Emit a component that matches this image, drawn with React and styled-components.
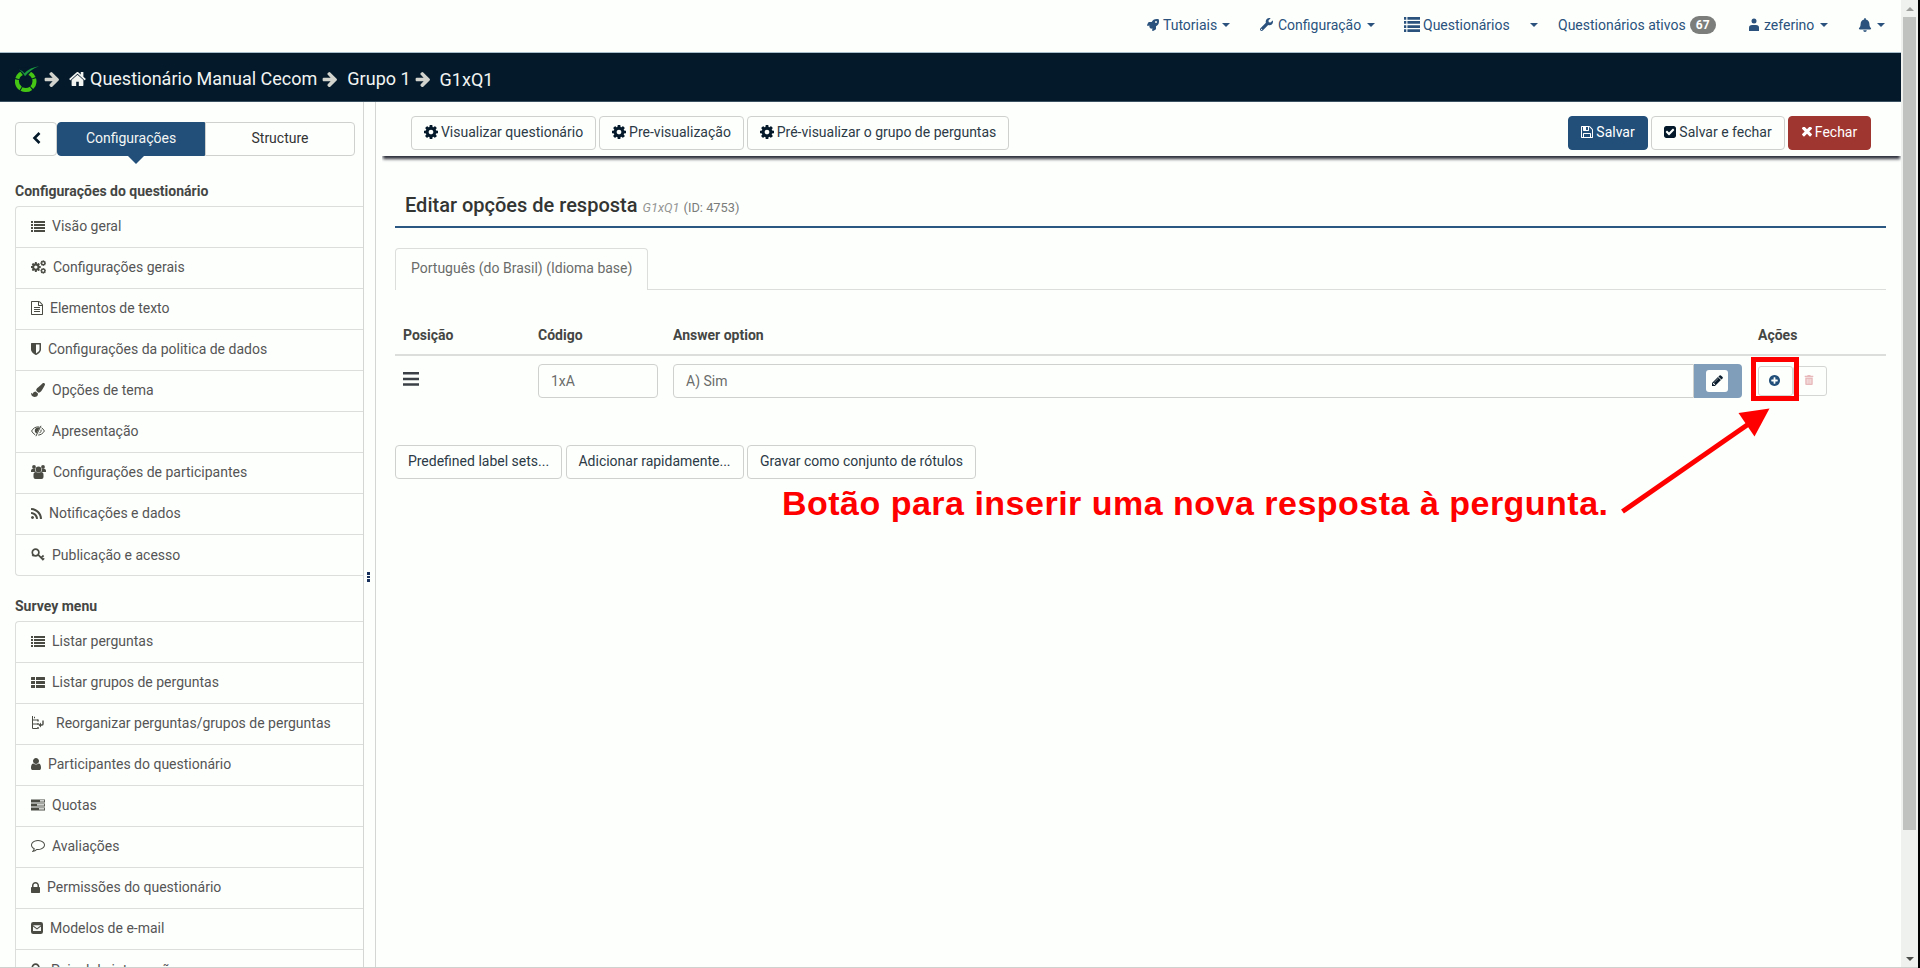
import React from 'react';
import styled, { createGlobalStyle, css } from 'styled-components';
import { FaRocket, FaWrench, FaBell, FaPaintBrush, FaTrashAlt } from 'react-icons/fa';

const Global = createGlobalStyle`
  * { box-sizing: border-box; }
  body { margin: 0; background: #fdfffd; overflow: hidden; font-family: Roboto, "Liberation Sans", sans-serif; font-size: 14px; line-height: 20px; color: #333; }
`;

/* ---------- icons ---------- */
const Svg = styled.svg`
  display: block;
  flex: none;
  fill: currentColor;
`;
const COG = 'M1152 896q0-106-75-181t-181-75-181 75-75 181 75 181 181 75 181-75 75-181zm512-109v222q0 12-8 23t-20 13l-185 28q-19 54-39 91 35 50 107 138 10 12 10 25t-9 23q-27 37-99 108t-94 71q-12 0-26-9l-138-108q-44 23-91 38-16 136-29 186-7 28-36 28h-222q-14 0-24.500-8.500t-11.500-21.500l-28-184q-49-16-90-37l-141 107q-10 9-25 9-14 0-25-11-126-114-165-168-7-10-7-23 0-12 8-23 15-21 51-66.500t54-70.500q-27-50-41-99l-183-27q-13-2-21-12.500t-8-23.500v-222q0-12 8-23t19-13l186-28q14-46 39-92-40-57-107-138-10-12-10-24 0-10 9-23 26-36 98.500-107.500t94.500-71.500q13 0 26 10l138 107q44-23 91-38 16-136 29-186 7-28 36-28h222q14 0 24.500 8.500t11.500 21.500l28 184q49 16 90 37l142-107q9-9 24-9 13 0 25 10 129 119 165 170 7 8 7 22 0 12-8 23-15 21-51 66.500t-54 70.500q26 50 41 98l183 28q13 2 21 12.500t8 23.500z';
const PATHS = {
  home: ['64 256 1664 1280', 'M1472 992v480q0 26-19 45t-45 19h-384v-384h-256v384h-384q-26 0-45-19t-19-45v-480q0-1 .5-3t.5-3l575-474 575 474q1 2 1 6zm223-69l-62 74q-8 9-21 11h-3q-13 0-21-7l-692-577-692 577q-12 8-24 7-13-2-21-11l-62-74q-8-10-7-23.500t11-21.500l719-599q32-26 76-26t76 26l244 204v-195q0-14 9-23t23-9h192q14 0 23 9t9 23v408l219 182q10 8 11 21.500t-7 23.500z'],
  arrow: ['64 180 1540 1560', 'M1600 960q0 54-37 91l-651 651q-39 37-91 37-51 0-90-37l-75-75q-38-38-38-91t38-91l293-293h-704q-52 0-84.500-37.500t-32.500-90.500v-128q0-53 32.500-90.500t84.500-37.500h704l-293-294q-38-36-38-90t38-90l75-75q38-38 90-38 53 0 91 38l651 651q37 35 37 90z'],
  cog: ['128 128 1536 1536', COG],
  check: ['128 128 1536 1536', 'M813 1299l614-614q19-19 19-45t-19-45l-102-102q-19-19-45-19t-45 19l-467 467-211-211q-19-19-45-19t-45 19l-102 102q-19 19-19 45t19 45l358 358q19 19 45 19t45-19zm851-883v960q0 119-84.500 203.500t-203.500 84.500h-960q-119 0-203.500-84.500t-84.500-203.500v-960q0-119 84.500-203.500t203.500-84.500h960q119 0 203.500 84.500t84.500 203.500z'],
  times: ['302 430 1188 1188', 'M1490 1322q0 40-28 68l-136 136q-28 28-68 28t-68-28l-294-294-294 294q-28 28-68 28t-68-28l-136-136q-28-28-28-68t28-68l294-294-294-294q-28-28-28-68t28-68l136-136q28-28 68-28t68 28l294 294 294-294q28-28 68-28t68 28l136 136q28 28 28 68t-28 68l-294 294 294 294q28 28 28 68z'],
  save: ['128 128 1536 1536', 'M512 1536h768v-384h-768v384zm896 0h128v-896q0-14-10-38.500t-20-34.500l-281-281q-10-10-34-20t-39-10v416q0 40-28 68t-68 28h-576q-40 0-68-28t-28-68v-416h-128v1280h128v-416q0-40 28-68t68-28h832q40 0 68 28t28 68v416zm-384-928v-320q0-13-9.500-22.500t-22.500-9.500h-192q-13 0-22.500 9.500t-9.500 22.500v320q0 13 9.500 22.500t22.500 9.500h192q13 0 22.500-9.500t9.500-22.500zm640 32v928q0 40-28 68t-68 28h-1344q-40 0-68-28t-28-68v-1344q0-40 28-68t68-28h928q40 0 88 20t76 48l280 280q28 28 48 76t20 88z'],
  plus: ['128 128 1536 1536', 'M1344 960v-128q0-26-19-45t-45-19h-256v-256q0-26-19-45t-45-19h-128q-26 0-45 19t-19 45v256h-256q-26 0-45 19t-19 45v128q0 26 19 45t45 19h256v256q0 26 19 45t45 19h128q26 0 45-19t19-45v-256h256q26 0 45-19t19-45zm320-64q0 209-103 385.500t-279.500 279.500-385.500 103-385.500-103-279.500-279.500-103-385.500 103-385.500 279.500-279.500 385.500-103 385.500 103 279.500 279.500 103 385.500z'],
  file: ['128 0 1536 1792', 'M1596 380q28 28 48 76t20 88v1152q0 40-28 68t-68 28h-1344q-40 0-68-28t-28-68v-1600q0-40 28-68t68-28h896q40 0 88 20t76 48zm-444-244v376h376q-10-29-22-41l-313-313q-12-12-41-22zm384 1528v-1024h-416q-40 0-68-28t-28-68v-416h-768v1536h1280zm-1024-864q0-14 9-23t23-9h704q14 0 23 9t9 23v64q0 14-9 23t-23 9h-704q-14 0-23-9t-9-23v-64zm736 224q14 0 23 9t9 23v64q0 14-9 23t-23 9h-704q-14 0-23-9t-9-23v-64q0-14 9-23t23-9h704zm0 256q14 0 23 9t9 23v64q0 14-9 23t-23 9h-704q-14 0-23-9t-9-23v-64q0-14 9-23t23-9h704z'],
  lock: ['320 128 1152 1408', 'M640 768h512v-192q0-106-75-181t-181-75-181 75-75 181v192zm832 96v576q0 40-28 68t-68 28h-960q-40 0-68-28t-28-68v-576q0-40 28-68t68-28h32v-192q0-184 132-316t316-132 316 132 132 316v192h32q40 0 68 28t28 68z'],
  shield: ['256 128 1280 1536', 'M1344 960v-640h-448v1137q119-63 213-137 235-184 235-360zm192-768v768q0 86-33.500 170.500t-83 150-118 127.500-126.500 103-121 77.500-89.500 49.500-42.500 20q-12 6-26 6t-26-6q-16-7-42.500-20t-89.500-49.500-121-77.500-126.500-103-118-127.500-83-150-33.500-170.500v-768q0-26 19-45t45-19h1152q26 0 45 19t19 45z'],
  pencil: ['128 128 1536 1536', 'M491 1536l91-91-235-235-91 91v107h128v128h107zm523-928q0-22-22-22-10 0-17 7l-542 542q-7 7-7 17 0 22 22 22 10 0 17-7l542-542q7-7 7-17zm-54-192l416 416-832 832h-416v-416zm683 96q0 53-37 90l-166 166-416-416 166-165q36-38 90-38 53 0 91 38l235 234q37 39 37 91z'],
  user: ['256 128 1280 1536', 'M1536 1399q0 109-62.500 187t-150.500 78h-854q-88 0-150.500-78t-62.500-187q0-85 8.500-160.500t31.500-152 58.500-131 94-89 134.500-34.500q131 128 313 128t313-128q76 0 134.500 34.500t94 89 58.500 131 31.500 152 8.500 160.500zm-256-887q0 159-112.500 271.500t-271.500 112.500-271.500-112.500-112.500-271.500 112.500-271.500 271.500-112.500 271.500 112.500 112.500 271.500z'],
  rss: ['192 128 1408 1408', 'M576 1344q0 80-56 136t-136 56-136-56-56-136 56-136 136-56 136 56 56 136zm512 123q2 28-17 48-18 21-47 21h-135q-25 0-43-16.500t-20-41.500q-22-229-184.500-391.500t-391.500-184.500q-25-2-41.500-20t-16.500-43v-135q0-29 21-47 17-17 43-17h5q160 13 306 80.500t259 181.500q114 113 181.500 259t80.500 306zm512 2q2 27-18 47-18 20-46 20h-143q-26 0-44.500-17.500t-19.500-42.500q-12-215-101-408.500t-231.500-336-336-231.500-408.500-102q-25-1-42.500-19.500t-17.500-43.500v-143q0-28 20-46 18-18 44-18h3q262 13 501.500 120t425.500 294q187 186 294 425.500t120 501.500z'],
  comment: ['0 256 1792 1536', 'M896 384q-204 0-381.500 69.500t-282 187.500-104.500 255q0 112 71.500 213.500t201.500 175.500l87 50-27 96q-24 91-70 172 152-63 275-171l43-38 57 6q69 8 130 8 204 0 381.500-69.500t282-187.500 104.500-255-104.500-255-282-187.500-381.500-69.500zm896 512q0 174-120 321.500t-326 233-450 85.500q-70 0-145-8-198 175-460 242-49 14-114 22h-5q-15 0-27-10.500t-16-27.500v-1q-3-4-.5-12t2-10 4.500-9.500l6-9 7-8.500 8-9q7-8 31-34.500t34.500-38 31-39.500 32.500-51 27-59 26-76q-157-89-247.500-220t-90.500-281q0-174 120-321.500t326-233 450-85.500 450 85.500 326 233 120 321.500z'],
};
const Icon = ({ name, w, h }) => (
  <Svg width={w} height={h || w} viewBox={PATHS[name][0]} preserveAspectRatio="none">
    <path d={PATHS[name][1]} />
  </Svg>
);
const ListIcon = ({ w = 14, h = 11 }) => (
  <Svg width={w} height={h} viewBox="0 0 14 11" preserveAspectRatio="none">
    {[0, 3, 6, 9].map((y) => <path key={y} d={`M0 ${y}h2v2h-2zM3 ${y}h11v2h-11z`} />)}
  </Svg>
);
const ThListIcon = () => (
  <Svg width="14" height="11" viewBox="0 0 14 11">
    {[0, 4, 8].map((y) => <path key={y} d={`M0.500 ${y}h3.500v3h-3.500q-.5 0-.5-.5v-2q0-.5 .5-.5zM5 ${y}h8.500q.5 0 .5 .5v2q0 .5-.5 .5h-8.500z`} />)}
  </Svg>
);
const CogsIcon = () => (
  <Svg width="15" height="14" viewBox="0 0 15 14">
    <path transform="translate(-.9 1.300) scale(.0064)" d={COG} />
    <path transform="translate(8.800 -.3) scale(.0038)" d={COG} />
    <path transform="translate(8.800 7.400) scale(.0038)" d={COG} />
  </Svg>
);
const UsersIcon = () => (
  <Svg width="15" height="14" viewBox="0 0 15 14">
    <circle cx="3" cy="2" r="1.900" />
    <circle cx="12" cy="2" r="1.900" />
    <circle cx="7.500" cy="4.500" r="2.900" />
    <path d="M0 7V5.800Q0 4 1.300 4H4q0 2 .9 3zM15 7V5.800Q15 4 13.700 4H11q0 2-.9 3zM2.500 12V9.800Q2.500 7 5 7q2.500 1.600 5 0 2.500 0 2.500 2.800V12q0 2-2 2h-6q-2 0-2-2z" />
  </Svg>
);
const EyeIcon = () => (
  <Svg width="14" height="12" viewBox="0 0 14 12">
    <path d="M.6 6C2 3.300 4.400 1.900 7 1.900l1.500.2M4.200 9.800C2.700 9 1.500 7.700.6 6M10.500 2.800c1.200.7 2.200 1.800 2.900 3.200-1.400 2.400-3.700 4-6.200 4.100" fill="none" stroke="currentColor" strokeWidth="1" />
    <path d="M7 2.400a3.200 3.200 0 0 0-2.300 5.500l.8.700L8.800 2.500z" />
    <path d="M10 .8 4.900 11.200M10.200 4.600q.2 2.400-1.800 3.600" fill="none" stroke="currentColor" strokeWidth="1" />
  </Svg>
);
const KeyIcon = () => (
  <Svg width="14" height="13" viewBox="0 0 14 13">
    <g fill="none" stroke="currentColor">
      <circle cx="4.600" cy="4.500" r="3.300" strokeWidth="1.700" />
      <path d="M2.600 8.300 1.200 6.600" strokeWidth="1.500" />
      <path d="M7 6.600 12 11.600M10.300 9.600 12.600 7.500" strokeWidth="1.700" />
      <path d="M11.400 12.200 13.200 10.300" strokeWidth="1.400" />
    </g>
  </Svg>
);
const TreeIcon = () => (
  <Svg width="13" height="14" viewBox="0 0 13 14">
    <g fill="none" stroke="currentColor">
      <path d="M1.500 0v12.500h5M1.500 4h5.500M1.500 8h5" strokeWidth="1" />
      <path d="M3 1.500h1M7 3.500v2M7 7v2M7 11v2" strokeWidth="1.400" />
      <path d="M12 4.500v3.500q0 1-1 1h-2" strokeWidth="1.400" />
    </g>
    <path d="M10 6.500v5L7.500 9z" />
  </Svg>
);
const TasksIcon = () => (
  <Svg width="14" height="12" viewBox="0 0 14 12">
    <path fillRule="evenodd" d="M0 .5h14v3h-14zM9 1.300v1.200h4.200V1.300zM0 4.500h14v3h-14zM6 5.300v1.200h7.200V5.300zM0 8.500h14v3h-14zM8 9.300v1.200h5.200V9.300z" />
  </Svg>
);
const MailIcon = () => (
  <Svg width="12" height="12" viewBox="0 0 12 12">
    <rect width="12" height="12" rx="2.200" />
    <path d="M2 3.200h8L6 6.200zM2 4.500l4 2.900 4-2.900V9H2z" fill="#f4f6f4" />
  </Svg>
);
const BarsIcon = () => (
  <Svg width="16" height="14" viewBox="0 0 16 14">
    <path d="M0 0h16v2.500h-16zM0 5.700h16v2.500h-16zM0 11.300h16v2.500h-16z" />
  </Svg>
);
const ChevronIcon = () => (
  <Svg width="9" height="12" viewBox="0 0 9 12">
    <path d="M7.500 1 2.500 6l5 5" fill="none" stroke="currentColor" strokeWidth="2.600" />
  </Svg>
);
const PersonIcon = () => (
  <Svg width="10" height="13" viewBox="0 0 10 13">
    <circle cx="5" cy="3" r="2.500" />
    <path d="M0 13V9.500Q0 7 3 7h4q3 0 3 2.500V13z" />
  </Svg>
);
const Logo = () => (
  <Svg width="24" height="27" viewBox="0 0 24 27">
    <circle cx="10.700" cy="15.300" r="8.800" fill="none" stroke="#45c614" strokeWidth="4" strokeDasharray="10.060 1" strokeDashoffset="3" />
    <path d="M2.500 2 10.500 12.500 20 1z" fill="#041a2b" />
    <path d="M4.200 3.500q3.300 1 5.300 3.800Q15 1.500 24 .3 15.500 3.500 10 10.300 8 6.300 4.200 3.500z" fill="#1b9a3e" />
  </Svg>
);

/* ---------- frame ---------- */
const Screen = styled.div`
  width: 1920px;
  height: 968px;
  display: flex;
  overflow: hidden;
  position: relative;
`;
const Page = styled.div`
  width: 1901px;
  display: flex;
  flex-direction: column;
  border-bottom: 1px solid #cfd1cf;
`;
const ScrollTrack = styled.div`
  width: 17px;
  background: #eff1ef;
  display: flex;
  flex-direction: column;
  align-items: center;
  border-bottom: 1px solid #cfd1cf;
`;
const ScrollArrow = styled.div`
  height: 17px;
  display: flex;
  align-items: center;
  &::after {
    content: '';
    border: 4px solid transparent;
    ${(p) => p.$down ? css`border-top-color: #4c4e4c; margin-top: 4px;` : css`border-bottom-color: #9c9e9c; margin-bottom: 3px;`}
  }
`;
const Thumb = styled.div`
  width: 13px;
  height: 813px;
  background: #c0c2c0;
  margin-bottom: auto;
`;
const Edge = styled.div`
  width: 2px;
  background: #000;
`;

/* ---------- top navigation ---------- */
const TopNav = styled.nav`
  height: 52px;
  flex: none;
  padding-left: 1147px;
  padding-bottom: 3px;
  display: flex;
  align-items: center;
  color: #2a527c;
`;
const NavItem = styled.div`
  width: ${(p) => p.$w}px;
  display: flex;
  align-items: center;
  gap: ${(p) => p.$gap || 4}px;
  white-space: nowrap;
`;
const Caret = styled.i`
  border: 4px solid transparent;
  border-top-color: currentColor;
  border-bottom: 0;
  margin-left: ${(p) => p.$ml ?? 1}px;
`;
const Badge = styled.span`
  width: 26px;
  height: 18px;
  border-radius: 10px;
  background: #7c7e7c;
  color: #fff;
  font-size: 12px;
  font-weight: 700;
  line-height: 18px;
  text-align: center;
`;

/* ---------- breadcrumb ---------- */
const Crumbs = styled.div`
  height: 50px;
  flex: none;
  background: #041a2b;
  border-top: 1px solid #a9c0cc;
  border-bottom: 1px solid #3a5161;
  padding: 4px 0 0 15px;
  display: flex;
  align-items: center;
  color: #f2f4f2;
  font-size: 18px;
  white-space: nowrap;
`;
const CrumbArrow = styled.span`
  color: #d3d3cd;
  margin: 0 ${(p) => p.$r}px 0 ${(p) => p.$l}px;
`;
const CrumbText = styled.span`
  margin-left: ${(p) => p.$l || 0}px;
  padding-top: ${(p) => p.$drop || 0}px;
`;

/* ---------- sidebar ---------- */
const Body = styled.div`
  flex: 1;
  min-height: 0;
  display: flex;
`;
const Sidebar = styled.aside`
  width: 364px;
  flex: none;
  padding: 20px 0 0 15px;
  border-right: 1px solid #d4d6d4;
  overflow: hidden;
`;
const Handle = styled.div`
  width: 12px;
  flex: none;
  border-right: 1px solid #d4d6d4;
  display: flex;
  flex-direction: column;
  align-items: center;
  gap: 1px;
  padding: 470px 2px 0 0;
`;
const Dot = styled.i`
  width: 3px;
  height: 2.700px;
  background: #18305c;
`;
const Switcher = styled.div`
  display: flex;
  height: 34px;
`;
const Collapse = styled.button`
  width: 42px;
  border: 1px solid #cfd1cf;
  border-radius: 4px;
  background: none;
  color: #041a2b;
  display: flex;
  align-items: center;
  justify-content: center;
  padding: 0 0 2px;
`;
const Tab = styled.button`
  width: ${(p) => p.$w}px;
  padding: 0 0 2px;
  font: inherit;
  position: relative;
  border: 1px solid ${(p) => p.$active ? '#214f7a' : '#cfd1cf'};
  border-radius: ${(p) => p.$active ? '4px 0 0 4px' : '0 4px 4px 0'};
  background: ${(p) => p.$active ? '#214f7a' : 'none'};
  color: ${(p) => p.$active ? '#f4f6f4' : '#333'};
  ${(p) => p.$active && css`
    &::after {
      content: '';
      position: absolute;
      top: 32px;
      left: 69px;
      border: 9px solid transparent;
      border-top-color: #214f7a;
      border-bottom: 0;
    }
  `}
`;
const MenuTitle = styled.h4`
  margin: ${(p) => p.$top}px 0 5px;
  font-size: 14px;
  line-height: 20px;
  font-weight: 700;
  color: #444644;
`;
const Menu = styled.div`
  border: 1px solid #dcdedc;
  border-right: 0;
  border-radius: 4px 0 0 4px;
  height: ${(p) => p.$rows * 41 + 1}px;
`;
const MenuRow = styled.div`
  height: 41px;
  padding: 0 0 2px 15px;
  display: flex;
  align-items: center;
  gap: ${(p) => p.$gap || 7}px;
  color: #555;
  border-bottom: 1px solid #dcdedc;
  white-space: nowrap;
  svg { color: #4a4c44; }
  &:last-child { border-bottom: 0; }
`;

/* ---------- main ---------- */
const Main = styled.main`
  flex: 1;
  min-width: 0;
`;
const Toolbar = styled.div`
  height: 54px;
  margin-left: 6px;
  padding: 14px 30px 0 29px;
  display: flex;
  gap: 3px;
  box-shadow: 0 4px 3px -1px #2d2f3a;
  clip-path: inset(0 0 -10px 0);
`;
const Button = styled.button`
  width: ${(p) => p.$w}px;
  height: 34px;
  padding: 0 0 3px;
  font: inherit;
  display: flex;
  align-items: center;
  justify-content: center;
  gap: 3px;
  border-radius: 4px;
  white-space: nowrap;
  border: 1px solid ${(p) => p.$bg || '#cfd1cf'};
  background: ${(p) => p.$bg || 'none'};
  color: ${(p) => p.$bg ? '#fff' : '#2c3a46'};
  svg { color: ${(p) => p.$bg ? '#fff' : '#041a2b'}; }
`;
const Spacer = styled.div`flex: 1;`;
const Content = styled.section`
  padding: 0 15px 0 19px;
`;
const Title = styled.h3`
  margin: 0;
  height: 72px;
  padding: 36px 0 0 10px;
  border-bottom: 2px solid #2b5883;
  font-size: 20px;
  line-height: 26px;
  font-weight: 500;
  display: flex;
  align-items: baseline;
  color: #333533;
`;
const Sub = styled.small`
  font-size: 12.800px;
  font-weight: 400;
  margin-left: ${(p) => p.$ml}px;
  font-style: ${(p) => p.$italic ? 'italic' : 'normal'};
  color: ${(p) => p.$italic ? '#949694' : '#7a7c7a'};
`;
const LangTabs = styled.div`
  margin-top: 20px;
  height: 42px;
  display: flex;
`;
const LangTab = styled.div`
  width: 253px;
  padding: 9px 0 0 15px;
  border: 1px solid #dcdedc;
  border-bottom: 0;
  border-radius: 4px 4px 0 0;
  color: #6a6c6a;
`;
const LangRest = styled.div`
  flex: 1;
  border-bottom: 1px solid #dcdedc;
`;
const Grid = styled.div`
  display: grid;
  grid-template-columns: 135px 135px 1085px 1fr;
  padding-left: 8px;
`;
const Head = styled(Grid)`
  margin-top: 35px;
  height: 31px;
  border-bottom: 2px solid #dcdedc;
  font-weight: 700;
  color: #444644;
`;
const Row = styled(Grid)`
  height: 89px;
  padding-top: 8px;
  color: #3a4046;
`;
const Grip = styled.div`padding-top: 8px;`;
const Field = styled.div`
  width: ${(p) => p.$w}px;
  height: 34px;
  padding: 6px 12px;
  border: 1px solid #cfd1cf;
  border-radius: ${(p) => p.$joined ? '4px 0 0 4px' : '4px'};
  color: #6a6c6a;
`;
const Group = styled.div`
  display: flex;
  height: 34px;
`;
const Addon = styled.div`
  width: 48px;
  height: 34px;
  border-radius: 0 4px 4px 0;
  background: #809dba;
  display: flex;
  align-items: center;
  justify-content: center;
  padding: 0 2px 1px 0;
`;
const EditBox = styled.span`
  width: 22px;
  height: 22px;
  border-radius: 3px;
  background: #fdfffd;
  color: #0a1c2b;
  display: flex;
  align-items: center;
  justify-content: center;
`;
const Actions = styled.div`
  display: flex;
  padding-top: 2px;
`;
const SmallButton = styled.button`
  width: ${(p) => p.$w}px;
  height: 30px;
  padding: 0 2px 2px 0;
  border: 1px solid #d4d6d4;
  border-radius: 3px;
  background: none;
  display: flex;
  align-items: center;
  justify-content: center;
  color: ${(p) => p.$c};
`;
const ButtonRow = styled.div`
  display: flex;
  gap: 3.500px;
`;

/* ---------- annotation over the page ---------- */
const Caption = styled.div`
  position: absolute;
  left: 782px;
  top: 483px;
  font: 700 34px/40px "Liberation Sans", Arial, sans-serif;
  letter-spacing: 0.490px;
  color: #ff0000;
  white-space: nowrap;
`;
const Frame = styled.div`
  position: absolute;
  left: 1751px;
  top: 357px;
  width: 48px;
  height: 44px;
  border: 5px solid #ff0000;
`;
const Pointer = styled.svg`
  position: absolute;
  left: 1615px;
  top: 400px;
`;

const SURVEY = [
  [<ListIcon />, 'Visão geral', 7],
  [<CogsIcon />, 'Configurações gerais', 7],
  [<Icon name="file" w={12} h={14} />, 'Elementos de texto', 7],
  [<Icon name="shield" w={10} h={12} />, 'Configurações da politica de dados', 7],
  [<FaPaintBrush size={14} />, 'Opções de tema', 7],
  [<EyeIcon />, 'Apresentação', 7],
  [<UsersIcon />, 'Configurações de participantes', 7],
  [<Icon name="rss" w={11} />, 'Notificações e dados', 7],
  [<KeyIcon />, 'Publicação e acesso', 7],
];
const SURVEY_MENU = [
  [<ListIcon />, 'Listar perguntas', 7],
  [<ThListIcon />, 'Listar grupos de perguntas', 7],
  [<TreeIcon />, 'Reorganizar perguntas/grupos de perguntas', 12],
  [<Icon name="user" w={10} h={12} />, 'Participantes do questionário', 7],
  [<TasksIcon />, 'Quotas', 7],
  [<Icon name="comment" w={14} h={12} />, 'Avaliações', 7],
  [<Icon name="lock" w={9} h={11} />, 'Permissões do questionário', 7],
  [<MailIcon />, 'Modelos de e-mail', 7],
  [<KeyIcon />, 'Painel de integração', 6],
];
const MenuList = ({ items }) => (
  <Menu $rows={items.length}>
    {items.map(([icon, label, gap]) => (
      <MenuRow key={label} $gap={gap}>{icon}<span>{label}</span></MenuRow>
    ))}
  </Menu>
);

export default function App() {
  return (
    <>
      <Global />
      <Screen>
        <Page>
          <TopNav>
            <NavItem $w={113}><FaRocket size={12} /><span>Tutoriais</span><Caret /></NavItem>
            <NavItem $w={144} $gap={5}><FaWrench size={13} /><span>Configuração</span><Caret /></NavItem>
            <NavItem $w={154} $gap={3}><ListIcon w={16} h={15} /><span>Questionários</span><Caret $ml={17} /></NavItem>
            <NavItem $w={191}><span>Questionários ativos</span><Badge>67</Badge></NavItem>
            <NavItem $w={109} $gap={5}><PersonIcon /><span>zeferino</span><Caret /></NavItem>
            <NavItem $w={30}><FaBell size={14} /><Caret /></NavItem>
          </TopNav>
          <Crumbs>
            <Logo />
            <CrumbArrow $l={5} $r={10}><Icon name="arrow" w={15} h={15} /></CrumbArrow>
            <Icon name="home" w={17} h={14} />
            <CrumbText $l={4}>Questionário Manual Cecom</CrumbText>
            <CrumbArrow $l={5} $r={10}><Icon name="arrow" w={15} h={15} /></CrumbArrow>
            <CrumbText>Grupo 1</CrumbText>
            <CrumbArrow $l={4} $r={10}><Icon name="arrow" w={15} h={15} /></CrumbArrow>
            <CrumbText $drop={2}>G1xQ1</CrumbText>
          </Crumbs>
          <Body>
            <Sidebar>
              <Switcher>
                <Collapse><ChevronIcon /></Collapse>
                <Tab $active $w={148}>Configurações</Tab>
                <Tab $w={150}>Structure</Tab>
              </Switcher>
              <MenuTitle $top={25}>Configurações do questionário</MenuTitle>
              <MenuList items={SURVEY} />
              <MenuTitle $top={20}>Survey menu</MenuTitle>
              <MenuList items={SURVEY_MENU} />
            </Sidebar>
            <Handle><Dot /><Dot /><Dot /></Handle>
            <Main>
              <Toolbar>
                <Button $w={185}><Icon name="cog" w={14} />Visualizar questionário</Button>
                <Button $w={145}><Icon name="cog" w={14} />Pre-visualização</Button>
                <Button $w={262}><Icon name="cog" w={14} />Pré-visualizar o grupo de perguntas</Button>
                <Spacer />
                <Button $w={80} $bg="#214f7a"><Icon name="save" w={12} />Salvar</Button>
                <Button $w={134}><Icon name="check" w={12} />Salvar e fechar</Button>
                <Button $w={83} $bg="#a03630"><Icon name="times" w={10} />Fechar</Button>
              </Toolbar>
              <Content>
                <Title>Editar opções de resposta<Sub $italic $ml={5}>G1xQ1</Sub><Sub $ml={4}>(ID: 4753)</Sub></Title>
                <LangTabs><LangTab>Português (do Brasil) (Idioma base)</LangTab><LangRest /></LangTabs>
                <Head><span>Posição</span><span>Código</span><span>Answer option</span><span>Ações</span></Head>
                <Row>
                  <Grip><BarsIcon /></Grip>
                  <Field $w={120}>1xA</Field>
                  <Group><Field $w={1021} $joined>A) Sim</Field><Addon><EditBox><Icon name="pencil" w={11} /></EditBox></Addon></Group>
                  <Actions>
                    <SmallButton $w={35} $c="#214f7a"><Icon name="plus" w={11} /></SmallButton>
                    <SmallButton $w={34} $c="#e8b9bb"><FaTrashAlt size={10} /></SmallButton>
                  </Actions>
                </Row>
                <ButtonRow>
                  <Button $w={167}>Predefined label sets...</Button>
                  <Button $w={178}>Adicionar rapidamente...</Button>
                  <Button $w={229}>Gravar como conjunto de rótulos</Button>
                </ButtonRow>
              </Content>
            </Main>
          </Body>
        </Page>
        <ScrollTrack><ScrollArrow /><Thumb /><ScrollArrow $down /></ScrollTrack>
        <Edge />
        <Caption>Botão para inserir uma nova resposta à pergunta.</Caption>
        <Frame />
        <Pointer width="160" height="120" viewBox="1615 400 160 120">
          <path d="M1622.500 511.500 1750 423" stroke="#ff0000" strokeWidth="5" />
          <path d="M1738.500 413 1769.500 408.500 1754.500 436.500z" fill="#ff0000" />
        </Pointer>
      </Screen>
    </>
  );
}
